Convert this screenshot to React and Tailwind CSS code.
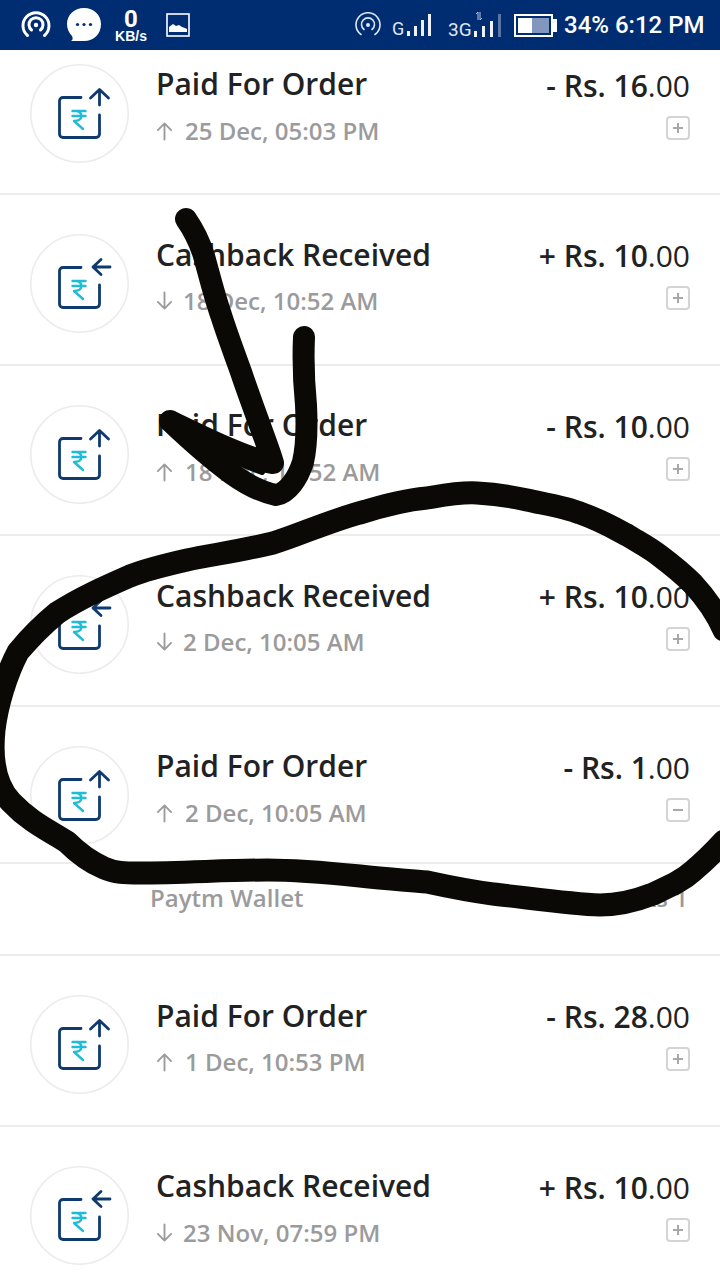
const rows = [
  { t: "Paid For Order", d: "25 Dec, 05:03 PM", a: "- Rs. 16", up: true },
  { t: "Cashback Received", d: "18 Dec, 10:52 AM", a: "+ Rs. 10", up: false },
  { t: "Paid For Order", d: "18 Dec, 10:52 AM", a: "- Rs. 10", up: true },
  { t: "Cashback Received", d: "2 Dec, 10:05 AM", a: "+ Rs. 10", up: false },
  { t: "Paid For Order", d: "2 Dec, 10:05 AM", a: "- Rs. 1", up: true, open: true },
  { t: "Paid For Order", d: "1 Dec, 10:53 PM", a: "- Rs. 28", up: true },
  { t: "Cashback Received", d: "23 Nov, 07:59 PM", a: "+ Rs. 10", up: false },
];

function TxIcon({ up }) {
  return (
    <svg viewBox="0 0 99 99" className="w-[99px] h-[99px] shrink-0" fill="none" strokeLinecap="round" strokeLinejoin="round">
      <circle cx="49.5" cy="49.5" r="48.7" stroke="#ececec" strokeWidth="1.6" fill="#fff" />
      <path d="M51 33.5H33a3.5 3.5 0 0 0-3.5 3.5v33a3.5 3.5 0 0 0 3.5 3.5h33a3.5 3.5 0 0 0 3.5-3.5V51" stroke="#0f3a6e" strokeWidth="2.8" />
      {up ? (
        <path d="M69.5 41V26M60.5 34l9-8.5 9 8.5" stroke="#0f3a6e" strokeWidth="2.8" />
      ) : (
        <path d="M80 33H63M71 25.5L63 33l8 7.5" stroke="#0f3a6e" strokeWidth="2.8" />
      )}
      <path d="M42.5 47h13M42.5 52h13M46 47c7 0 8 10-2 10l9 8" stroke="#1fbcd9" strokeWidth="2.4" />
    </svg>
  );
}

function DirArrow({ up }) {
  return (
    <svg viewBox="0 0 18 20" className={up ? "w-[17px] h-[20px] mr-[12px] shrink-0" : "w-[17px] h-[20px] mr-[10px] shrink-0"} fill="none" stroke="#9b9b9b" strokeWidth="2" strokeLinecap="round" strokeLinejoin="round">
      {up ? <path d="M9 19V2M2 9l7-7 7 7" /> : <path d="M9 1v17M2 11l7 7 7-7" />}
    </svg>
  );
}

function Row({ r }) {
  return (
    <div className="h-[170.5px] shrink-0 flex items-start pl-[30px] pr-[30px] pt-[39px] border-b-2 border-[#ececec]">
      <TxIcon up={r.up} />
      <div className="ml-[27px] flex-1 whitespace-nowrap mt-[0.5px]">
        <div className="text-[30px] leading-[40px] font-semibold text-[#222222]">{r.t}</div>
        <div className="mt-[6.5px] flex items-center text-[24px] leading-[40px] font-semibold text-[#9b9b9b]">
          <DirArrow up={r.up} />
          {r.d}
        </div>
      </div>
      <div className="flex flex-col items-end">
        <div className="text-[30px] leading-[40px] text-[#222222] whitespace-nowrap mt-[2px]">
          <span className="font-semibold">{r.a}</span>
          <span className="font-normal">.00</span>
        </div>
        <div className="mt-[10px] w-[24px] h-[24px] border-2 border-[#d4d4d4] rounded-[4px] flex items-center justify-center">
          <svg viewBox="0 0 14 14" className="w-[14px] h-[14px]" stroke="#a8a8a8" strokeWidth="2">
            {r.open ? <path d="M2 7h10" /> : <path d="M2 7h10M7 2v10" />}
          </svg>
        </div>
      </div>
    </div>
  );
}

function StatusBar() {
  return (
    <div className="h-[50px] bg-[#002d72] flex items-center shrink-0 relative z-10 text-white font-['Roboto',sans-serif]">
      <svg viewBox="0 0 30 30" className="w-[30px] h-[30px] ml-[21px]" fill="none" stroke="#fff" strokeWidth="3" strokeLinecap="round">
        <path d="M6.5 25.5a13 13 0 1 1 17 0" />
        <path d="M10.5 20a7 7 0 1 1 9 0" />
        <circle cx="15" cy="15" r="2.2" fill="#fff" stroke="none" />
      </svg>
      <svg viewBox="0 0 36 36" className="w-[36px] h-[36px] ml-[15px]">
        <path d="M18 1c10 0 17 7 17 16 0 10-7 17-17 17H5c2-1 2-3 1-5-3-3-5-7-5-12C1 8 8 1 18 1z" fill="#fff" />
        <circle cx="11.5" cy="17.5" r="1.6" fill="#002d72" />
        <circle cx="18" cy="17.5" r="1.6" fill="#002d72" />
        <circle cx="24.5" cy="17.5" r="1.6" fill="#002d72" />
      </svg>
      <div className="w-[36px] ml-[11px] flex flex-col items-center font-bold">
        <span className="text-[24px] leading-[22px]">0</span>
        <span className="text-[14px] leading-[13px] font-['Liberation_Sans',sans-serif]">KB/s</span>
      </div>
      <svg viewBox="0 0 24 24" className="w-[24px] h-[24px] ml-[17px]">
        <rect x="1" y="1" width="22" height="22" fill="none" stroke="#fff" strokeWidth="1.6" />
        <path d="M3 19v-5l4-3 3 2 3-1 3 2 3 1 2 1v3z" fill="#fff" />
      </svg>
      <svg viewBox="0 0 26 26" className="w-[26px] h-[26px] ml-[165px]" fill="none" stroke="#dfe6f2" strokeWidth="1.6" strokeLinecap="round">
        <path d="M6 22.5a12 12 0 1 1 14 0" />
        <path d="M9 17.5a6.5 6.5 0 1 1 8 0" />
        <circle cx="13" cy="13" r="2" fill="#dfe6f2" stroke="none" />
      </svg>
      <span className="ml-[11px] mt-[8px] w-[14px] text-[18px] leading-none text-[#dfe6f2]">G</span>
      <svg viewBox="0 0 28 26" className="w-[28px] h-[26px]" fill="#eef2f8">
        <rect x="1" y="19" width="3" height="5" />
        <rect x="8" y="14" width="3" height="10" />
        <rect x="15" y="8" width="3" height="16" />
        <rect x="22" y="2" width="3" height="22" />
      </svg>
      <span className="ml-[14px] mt-[8px] w-[24px] text-[19px] leading-none text-[#dfe6f2]">3G</span>
      <svg viewBox="0 0 32 28" className="w-[32px] h-[28px] shrink-0" fill="#eef2f8">
        <rect x="2" y="20" width="3" height="6" />
        <rect x="10" y="15" width="3" height="11" />
        <rect x="18" y="10" width="3" height="16" />
        <rect x="26" y="3" width="3" height="23" fill="#5b76a6" />
        <path d="M4 3l2-2 0 8M8 1v8l2-2" fill="none" stroke="#b9c6de" strokeWidth="1" />
      </svg>
      <div className="ml-[10px] w-[39px] h-[23px] border-2 border-white flex items-stretch p-[2px] shrink-0">
        <div className="w-[14px] bg-white" />
        <div className="flex-1 bg-[#8297bd]" />
      </div>
      <div className="w-[4px] h-[13px] bg-white shrink-0" />
      <span className="ml-[7px] text-[24px] leading-none font-medium whitespace-nowrap">34% 6:12 PM</span>
    </div>
  );
}

const loop = "M370 510C330 520 300 535 273 543C240 551 210 555 187 560C165 565 145 570 130 576C105 587 80 598 57 613C40 627 28 640 18 652C6 675 -3 705 -6 730C-9 760 -5 785 11 802C30 822 48 830 67 842C80 855 90 862 104 868C115 873 125 873 140 873C180 873 230 870 267 870C300 870 330 873 360 876C385 879 405 880 427 882C450 887 470 891 493 894C530 898 570 904 600 905C620 905 635 901 653 894C670 886 682 881 693 871C705 861 712 854 724 841M360 513C385 505 405 500 427 498C445 495 460 492 477 493C495 494 510 496 527 500C545 504 565 507 580 513C600 520 612 527 627 535C640 543 650 548 660 556C672 565 682 573 693 584C705 597 715 610 724 630";
const arrow = "M186 219C195 232 200 243 204 256C210 278 215 298 221 315C228 337 235 355 241 372C247 390 252 403 258 420C264 437 270 452 273 463C250 460 205 438 170 421C190 440 210 458 232 474C246 484 262 492 276 495C288 493 298 478 303 462C307 445 307 425 306 405C304 385 303 360 304 337";

function Scribble() {
  return (
    <svg viewBox="0 0 720 1280" className="absolute inset-0 w-[720px] h-[1280px] pointer-events-none z-20" fill="none" stroke="#0a0906" strokeLinecap="round" strokeLinejoin="round">
      <path d={arrow} strokeWidth="22" />
      <path d="M178 424L268 461L262 472L205 450z" fill="#0a0906" strokeWidth="6" />
      <path d={loop} strokeWidth="23" />
    </svg>
  );
}

export default function App() {
  return (
    <div className="relative w-[720px] h-[1280px] overflow-hidden bg-white font-['Open_Sans',sans-serif] flex flex-col">
      <StatusBar />
      <div className="flex-1 overflow-hidden">
        <div className="-mt-[25.5px] flex flex-col">
          {rows.slice(0, 5).map((r, i) => (
            <div key={i} className={r.open ? "h-[155px] overflow-hidden" : ""}>
              <Row r={r} />
            </div>
          ))}
          <div className="h-[94.5px] shrink-0 border-t-2 border-[#ececec] border-b-2 flex items-start pt-[14px] justify-between pl-[150px] pr-[32px] text-[24px] leading-[40px] font-semibold text-[#9b9b9b]">
            <span>Paytm Wallet</span>
            <span>Rs 1</span>
          </div>
          {rows.slice(5).map((r, i) => (
            <Row key={i} r={r} />
          ))}
        </div>
      </div>
      <Scribble />
    </div>
  );
}
